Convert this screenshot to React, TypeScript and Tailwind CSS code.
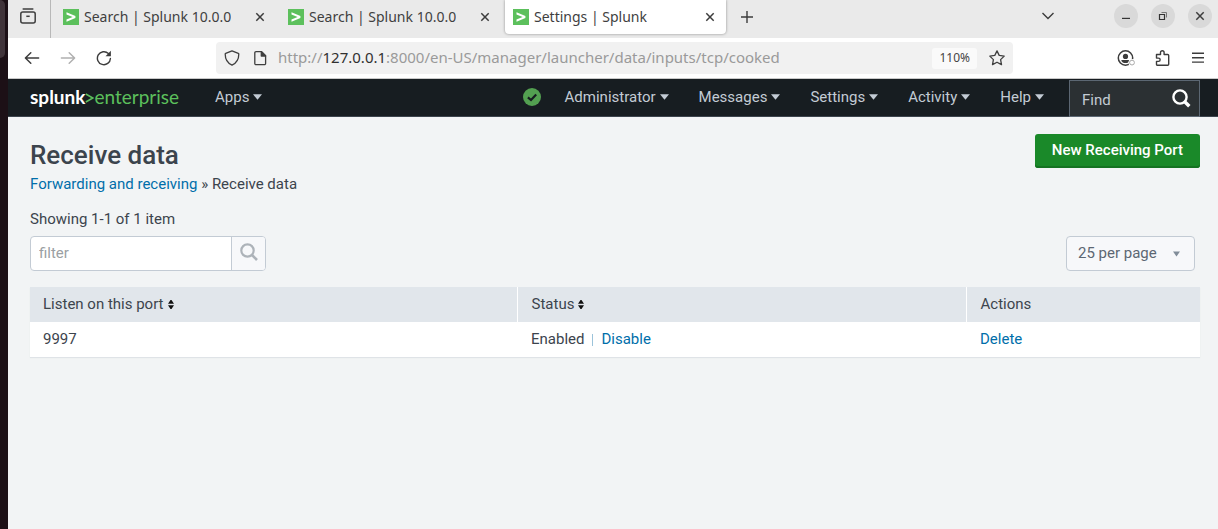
import React from "react";

function Favicon() {
  return (
    <svg viewBox="0 0 16 16" className="size-4 shrink-0" aria-hidden="true">
      <rect width="16" height="16" fill="#5cc05c" />
      <path d="M3.5 3.2 12.4 7v2L3.5 12.8v-2.2L9.6 8 3.5 5.4z" fill="#fff" />
    </svg>
  );
}

function CloseIcon() {
  return (
    <svg viewBox="0 0 10 10" className="size-[10px]" stroke="#3c3c3c" strokeWidth="1.5" aria-hidden="true">
      <path d="M1.3 1.3l7.4 7.4M8.7 1.3L1.3 8.7" />
    </svg>
  );
}

function Tab({ title, active = false }: { title: string; active?: boolean }) {
  return (
    <div className="w-[225px] px-[2px]">
      <div
        className={
          active
            ? "flex h-[34px] items-center rounded-b-[4px] bg-white pr-[11px] pl-2 shadow-[0_0_3px_rgba(0,0,0,0.4)]"
            : "flex h-[34px] items-center pr-[11px] pl-2"
        }
      >
        <a href="#tab" className="flex min-w-0 flex-1 items-center gap-[5px] leading-8">
          <Favicon />
          <span className="truncate">{title}</span>
        </a>
        <button type="button" aria-label="Close tab" className="shrink-0">
          <CloseIcon />
        </button>
      </div>
    </div>
  );
}

function TabStrip() {
  return (
    <div className="flex h-[38px] bg-[#eaeaea] font-['Noto_Sans','Open_Sans',sans-serif] text-[14px] text-[#3f3f3f]">
      <button type="button" aria-label="Recent tabs" className="flex h-8 w-[42px] shrink-0 items-center pl-3">
        <svg viewBox="0 0 16 16" className="size-4" fill="none" stroke="#3f3f3f" strokeWidth="1.5" aria-hidden="true">
          <path d="M3.2 1.1h9.6" strokeLinecap="round" />
          <rect x="0.8" y="3.9" width="14.4" height="11.2" rx="2" />
          <path d="M6.3 8.3h3.4" />
        </svg>
      </button>
      <div className="flex min-w-0 flex-1 border-l border-[#b8b8b8]">
        <div className="flex pl-[2px]">
          <Tab title="Search | Splunk 10.0.0" />
          <Tab title="Search | Splunk 10.0.0" />
          <Tab title="Settings | Splunk" active />
        </div>
        <button type="button" aria-label="New tab" className="ml-[13px] flex h-[33px] items-center">
          <svg viewBox="0 0 12 12" className="size-3" stroke="#3c3c3c" strokeWidth="1.4" aria-hidden="true">
            <path d="M6 0v12M0 6h12" />
          </svg>
        </button>
        <div className="ml-auto flex h-8 items-center pr-[6px]">
          <button type="button" aria-label="List all tabs" className="mr-[60px]">
            <svg viewBox="0 0 12 8" className="h-2 w-3" fill="none" stroke="#3c3c3c" strokeWidth="1.4" aria-hidden="true">
              <path d="M0.5 1 6 6.6 11.5 1" />
            </svg>
          </button>
          <div className="flex gap-[13px]">
            <button type="button" aria-label="Minimize" className="flex size-6 items-center justify-center rounded-full bg-[#d9d9d9]">
              <svg viewBox="0 0 10 10" className="size-[10px]" stroke="#333" strokeWidth="1.2" aria-hidden="true">
                <path d="M1 7.4h8" />
              </svg>
            </button>
            <button type="button" aria-label="Restore" className="flex size-6 items-center justify-center rounded-full bg-[#d9d9d9]">
              <svg viewBox="0 0 10 10" className="size-[10px]" fill="none" stroke="#333" aria-hidden="true">
                <path d="M1.5 3.5h5v5h-5z" strokeWidth="1.2" />
                <path d="M3.5 1.5h5v5" stroke="#777" strokeWidth="1" />
              </svg>
            </button>
            <button type="button" aria-label="Close window" className="flex size-6 items-center justify-center rounded-full bg-[#d9d9d9]">
              <CloseIcon />
            </button>
          </div>
        </div>
      </div>
    </div>
  );
}

function Toolbar() {
  return (
    <div className="flex h-[41px] items-center border-b border-[#c9c9c9] bg-white pr-[13px] pl-4">
      <div className="flex items-center gap-5">
        <button type="button" aria-label="Back">
          <svg viewBox="0 0 16 16" className="size-4" fill="none" stroke="#3c3c3c" strokeWidth="1.5" strokeLinecap="round" strokeLinejoin="round" aria-hidden="true">
            <path d="M14.6 8H1.6M6.8 2.8 1.4 8l5.4 5.2" />
          </svg>
        </button>
        <button type="button" aria-label="Forward" disabled>
          <svg viewBox="0 0 16 16" className="size-4" fill="none" stroke="#b0b0b0" strokeWidth="1.5" strokeLinecap="round" strokeLinejoin="round" aria-hidden="true">
            <path d="M1.4 8h13M9.2 2.8 14.6 8l-5.4 5.2" />
          </svg>
        </button>
        <button type="button" aria-label="Reload">
          <svg viewBox="0 0 16 16" className="size-4" fill="none" stroke="#3c3c3c" strokeWidth="1.4" aria-hidden="true">
            <path d="M14.4 8.4A6.5 6.5 0 1 1 12.4 3.5" strokeLinecap="round" />
            <path d="M14.9.8v5.4H9.5z" fill="#3c3c3c" stroke="none" />
          </svg>
        </button>
      </div>
      <div className="mr-[104px] ml-[104px] flex h-8 min-w-0 flex-1 items-center rounded-[4px] bg-[#f1f1f1] px-2">
        <svg viewBox="0 0 16 16" className="mr-3 size-4 shrink-0" fill="none" stroke="#3f3f3f" strokeWidth="1.3" strokeLinejoin="round" aria-hidden="true">
          <path d="M8 .9 14.3 3.3a.8.8 0 0 1 .5.8C14.8 9.6 12.3 13.3 8 15.2 3.7 13.3 1.2 9.6 1.2 4.1a.8.8 0 0 1 .5-.8z" />
        </svg>
        <svg viewBox="0 0 16 16" className="mr-[10px] size-4 shrink-0" fill="none" stroke="#3f3f3f" strokeWidth="1.3" strokeLinejoin="round" aria-hidden="true">
          <path d="M4 1.7h5.6l4 4v7.8a1.2 1.2 0 0 1-1.2 1.2H4a1.2 1.2 0 0 1-1.2-1.2V2.9A1.2 1.2 0 0 1 4 1.7z" />
          <path d="M9.3 1.7v4.3h4.3z" fill="#3f3f3f" />
        </svg>
        <div className="min-w-0 flex-1 truncate pb-px font-['Noto_Sans','Open_Sans',sans-serif] text-[15px] text-[#9a9a9a]">
          http://<span className="text-[#303030]">127.0.0.1</span>:8000/en-US/manager/launcher/data/inputs/tcp/cooked
        </div>
        <button type="button" className="mr-3 h-[21px] rounded-[3px] bg-[#fafafa] px-[7px] font-['Noto_Sans','Open_Sans',sans-serif] text-[12px] leading-5 text-[#444]">
          110%
        </button>
        <button type="button" aria-label="Bookmark this page">
          <svg viewBox="0 0 16 16" className="size-4" fill="none" stroke="#3f3f3f" strokeWidth="1.3" strokeLinejoin="round" aria-hidden="true">
            <path d="M8 .9l2.2 4.5 5 .7-3.6 3.5.9 5L8 12.2l-4.5 2.4.9-5L.8 6.100l5-.7z" />
          </svg>
        </button>
      </div>
      <div className="flex items-center gap-5">
        <button type="button" aria-label="Account">
          <svg viewBox="0 0 18 16" className="h-4 w-[18px]" aria-hidden="true">
            <circle cx="8.5" cy="8" r="7.2" fill="none" stroke="#3c3c3c" strokeWidth="1.5" />
            <circle cx="8.5" cy="6.4" r="2.6" fill="#3c3c3c" />
            <path d="M4.3 9.9h8.4c0 2-1.9 3.2-4.2 3.2s-4.2-1.2-4.2-3.2z" fill="#3c3c3c" />
            <circle cx="15" cy="12.6" r="3.6" fill="#fff" />
            <circle cx="15" cy="12.6" r="2.4" fill="none" stroke="#aaa" />
          </svg>
        </button>
        <button type="button" aria-label="Extensions">
          <svg viewBox="0 0 16 16" className="size-4" fill="none" stroke="#3c3c3c" strokeWidth="1.4" strokeLinejoin="round" aria-hidden="true">
            <path d="M1.5 4.5h4V2.6a1.8 1.8 0 0 1 3.6 0v1.9h3.6a1 1 0 0 1 1 1v8.700a1 1 0 0 1-1 1H2.500a1 1 0 0 1-1-1v-2.800h2a1.600 1.600 0 0 0 0-3.300h-2z" />
          </svg>
        </button>
        <button type="button" aria-label="Open menu">
          <svg viewBox="0 0 14 16" className="h-4 w-[14px]" stroke="#3c3c3c" strokeWidth="1.4" aria-hidden="true">
            <path d="M1 3.3h12M1 7.7h12M1 12.1h12" />
          </svg>
        </button>
      </div>
    </div>
  );
}

function NavMenu({ label }: { label: string }) {
  return (
    <button type="button" className="flex items-center gap-1 text-[#c3cbd4]">
      {label}
      <svg viewBox="0 0 9 6" className="h-[6px] w-[9px]" fill="currentColor" aria-hidden="true">
        <path d="M0 .2h9L4.5 5.800z" />
      </svg>
    </button>
  );
}

function AppBar() {
  return (
    <header className="flex h-[38px] items-stretch border-b border-[#3c444d] bg-[#171d21] pr-[18px] pl-[22px]">
      <a href="#home" className="flex w-[185px] items-center pb-px font-['Lato','Open_Sans',sans-serif] text-[19px] text-[#5cc05c]">
        <span className="font-bold text-white">splunk</span>
        <svg viewBox="0 0 9 12" className="mt-px h-3 w-[9px]" fill="none" stroke="currentColor" strokeWidth="1.5" aria-hidden="true">
          <path d="M.8 2 7.8 6 .8 10" />
        </svg>
        <span>enterprise</span>
      </a>
      <nav className="flex flex-1 items-center gap-[30px] pb-px">
        <NavMenu label="Apps" />
        <button type="button" aria-label="Health status: good" className="-mr-[6px] ml-auto">
          <svg viewBox="0 0 18 18" className="size-[18px]" aria-hidden="true">
            <circle cx="9" cy="9" r="9" fill="#53a051" />
            <path d="M4.9 9.3 8 12l5.2-5.4" fill="none" stroke="#171d21" strokeWidth="2.2" />
          </svg>
        </button>
        <NavMenu label="Administrator" />
        <NavMenu label="Messages" />
        <NavMenu label="Settings" />
        <NavMenu label="Activity" />
        <NavMenu label="Help" />
      </nav>
      <form className="mt-px -mb-px ml-[25px] flex w-[131px] items-center border border-[#5c6773] bg-[#2b3033] pr-2 pl-3" onSubmit={(e) => e.preventDefault()}>
        <input type="text" aria-label="Find" placeholder="Find" className="min-w-0 flex-1 bg-transparent pt-[3px] outline-none placeholder:text-[#c3cbd4]" />
        <button type="submit" aria-label="Search">
          <svg viewBox="0 0 19 19" className="size-[19px]" fill="none" stroke="#fff" aria-hidden="true">
            <circle cx="8" cy="8" r="6.6" strokeWidth="2.4" />
            <path d="M12.5 12.5 17.3 17.3" strokeWidth="3.4" />
          </svg>
        </button>
      </form>
    </header>
  );
}

function SortIcon() {
  return (
    <svg viewBox="0 0 6 9" className="h-[9px] w-[6px]" aria-hidden="true">
      <path d="M0 3.8 2.5 0h1L6 3.800zM0 5.200h6L3.500 9h-1z" fill="#111" />
    </svg>
  );
}

function ReceiveData() {
  return (
    <main className="flex-1 pt-[17px] pr-[18px] pl-[22px] text-[#3c444d]">
      <div className="flex items-start justify-between">
        <div className="pt-1">
          <h1 className="text-[26px] leading-[34px] font-medium">Receive data</h1>
          <div className="pt-px leading-[22px]">
            <a href="#forwarding" className="text-[#006eaa]">Forwarding and receiving</a> » Receive data
          </div>
        </div>
        <button type="button" className="h-[34px] rounded-[3px] bg-[#1a8929] px-[17px] pb-[2px] font-medium text-white shadow-[inset_0_-2px_0_#157322]">
          New Receiving Port
        </button>
      </div>
      <p className="pt-[13px] leading-[22px]">Showing 1-1 of 1 item</p>
      <div className="mt-[6px] flex items-center justify-between pr-[5px]">
        <form className="flex h-[35px] w-[236px] overflow-hidden rounded-[4px] border border-[#c3cbd4] bg-white" onSubmit={(e) => e.preventDefault()}>
          <input type="text" aria-label="filter" placeholder="filter" className="min-w-0 flex-1 px-2 outline-none placeholder:text-[#9b9fa3]" />
          <button type="submit" aria-label="Apply filter" className="flex w-[34px] items-center justify-center border-l border-[#c3cbd4] bg-[#f7f8fa] pb-[3px]">
            <svg viewBox="0 0 18 18" className="size-[18px]" fill="none" stroke="#adb3b9" aria-hidden="true">
              <circle cx="7.5" cy="7.5" r="6.2" strokeWidth="2.2" />
              <path d="M12 12 17 17" strokeWidth="2.6" />
            </svg>
          </button>
        </form>
        <div className="grid h-[35px] w-[129px] items-center">
          <select aria-label="Items per page" className="col-start-1 row-start-1 h-[35px] appearance-none rounded-[4px] border border-[#c3cbd4] bg-[#f7f8fa] pr-7 pl-[11px] text-[#5c6773]">
            <option>25 per page</option>
            <option>50 per page</option>
            <option>100 per page</option>
          </select>
          <svg viewBox="0 0 7 6" className="pointer-events-none col-start-1 row-start-1 mr-[15px] h-[6px] w-[7px] justify-self-end" aria-hidden="true">
            <path d="M0 .5h7L3.5 5.500z" fill="#818d99" />
          </svg>
        </div>
      </div>
      <table className="mt-4 w-full table-fixed border-collapse bg-white text-left shadow-[0_1px_1px_#dfe3e7]">
        <thead>
          <tr className="h-[35px] bg-[#e1e6eb]">
            <th className="w-[487px] border-r border-white px-[13px] font-normal">
              <button type="button" className="flex items-center gap-1">Listen on this port <SortIcon /></button>
            </th>
            <th className="w-[449px] border-r border-white px-[14px] font-normal">
              <button type="button" className="flex items-center gap-1">Status <SortIcon /></button>
            </th>
            <th className="px-[14px] font-normal">Actions</th>
          </tr>
        </thead>
        <tbody>
          <tr className="h-[35px]">
            <td className="px-[13px]">9997</td>
            <td className="px-[14px]">
              <div className="flex items-center">
                Enabled
                <span className="mx-2 h-3 w-px bg-[#9bc3da]" />
                <a href="#disable" className="text-[#006eaa]">Disable</a>
              </div>
            </td>
            <td className="px-[14px]"><a href="#delete" className="text-[#006eaa]">Delete</a></td>
          </tr>
        </tbody>
      </table>
    </main>
  );
}

export default function App() {
  return (
    <div className="flex min-h-screen">
      <aside className="w-2 shrink-0 bg-[#1c1016]">
        <div className="h-[58px] w-[5px] rounded-r-[5px] bg-[#40343a]" />
      </aside>
      <div className="flex min-w-0 flex-1 flex-col bg-[#f2f4f5] font-['Roboto','Open_Sans',sans-serif] text-[15px]">
        <TabStrip />
        <Toolbar />
        <AppBar />
        <ReceiveData />
      </div>
    </div>
  );
}
